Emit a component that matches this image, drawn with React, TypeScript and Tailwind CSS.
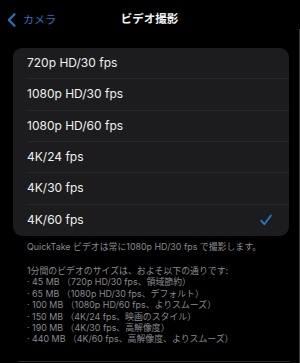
import React from "react";

const rows = [
  "720p HD/30 fps",
  "1080p HD/30 fps",
  "1080p HD/60 fps",
  "4K/24 fps",
  "4K/30 fps",
  "4K/60 fps",
];

const sizes = [
  "45 MB （720p HD/30 fps、領域節約）",
  "65 MB （1080p HD/30 fps、デフォルト）",
  "100 MB （1080p HD/60 fps、よりスムーズ）",
  "150 MB （4K/24 fps、映画のスタイル）",
  "190 MB （4K/30 fps、高解像度）",
  "440 MB （4K/60 fps、高解像度、よりスムーズ）",
];

const font = { fontFamily: '"Inter", "Noto Sans CJK JP", sans-serif' };

export default function App() {
  return (
    <div className="w-[300px] h-[363px] bg-black flex overflow-hidden" style={font}>
      <div className="w-[299px] flex flex-col">
        <div className="relative h-[39px] flex items-center justify-center">
          <div className="absolute left-[7px] top-[13px] flex items-center gap-[7px] text-[#2e72c0]">
            <svg width="9" height="14" viewBox="0 0 9 14" fill="none">
              <path d="M7.5 1.2 L1.8 7 L7.5 12.8" stroke="currentColor" strokeWidth="2.1" strokeLinecap="round" strokeLinejoin="round" />
            </svg>
            <span className="text-[11px] leading-none">カメラ</span>
          </div>
          <span className="text-[11.5px] font-bold text-[#f2f2f2] leading-none">ビデオ撮影</span>
        </div>
        <div className="ml-[13px] mt-[9px] w-[276px] rounded-[9px] bg-[#1c1c1e] overflow-hidden">
          {rows.map((r, i) => (
            <div key={r} className="pl-[14px]">
              <div
                className={
                  "h-[31.33px] flex items-center justify-between pr-[17px] " +
                  (i < rows.length - 1 ? "border-b border-[#29292b]" : "")
                }
              >
                <span className="text-[12px] text-[#f0f0f0] leading-none">{r}</span>
                {i === rows.length - 1 && (
                  <svg width="12" height="12" viewBox="0 0 12 12" fill="none">
                    <path d="M1.2 6.6 L4.3 10.2 L10.8 1.6" stroke="#2a72c2" strokeWidth="1.9" strokeLinecap="round" strokeLinejoin="round" />
                  </svg>
                )}
              </div>
            </div>
          ))}
        </div>
        <div className="ml-[27px] mt-[5px] text-[8.9px] leading-[11.4px] text-[#8a8a8f]">
          <div>QuickTake ビデオは常に1080p HD/30 fps で撮影します。</div>
          <div className="mt-[12.6px]">1分間のビデオのサイズは、およそ以下の通りです:</div>
          {sizes.map((s) => (
            <div key={s}>· {s}</div>
          ))}
        </div>
        <div className="flex-1" />
        <div className="ml-[18px] mr-[9px] mb-[1px] h-px bg-[#2a2a2a]" />
      </div>
      <div className="w-px mt-[29px] bg-[#3a3a3a]" />
    </div>
  );
}
